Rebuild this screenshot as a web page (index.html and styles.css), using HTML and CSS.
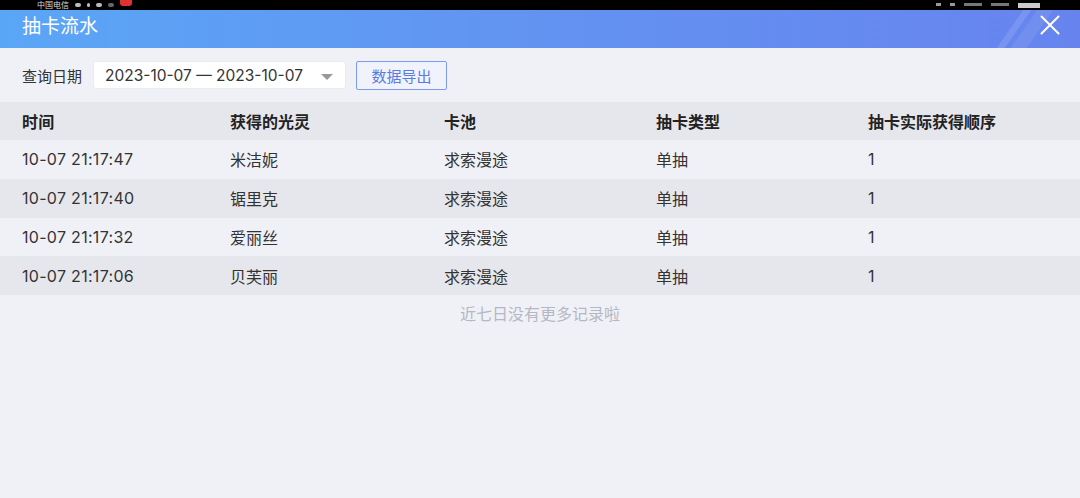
FILE: index.html
```html
<!DOCTYPE html>
<html lang="zh">
<head>
<meta charset="utf-8">
<link rel="stylesheet" href="styles.css">
</head>
<body>
<div class="statusbar">
  <div class="sb-left">
    <span class="carrier">中国电信</span>
    <span class="sb-dot"></span><span class="sb-dot small"></span><span class="sb-dot"></span>
    <span class="sb-dot gray"></span><span class="sb-badge"></span>
  </div>
  <div class="sb-right">
    <span class="sb-mark"></span><span class="sb-mark"></span><span class="sb-mark wide"></span><span class="sb-mark wide"></span><span class="sb-bat"></span>
  </div>
</div>
<header class="titlebar">
  <h1 class="title">抽卡流水</h1>
  <span class="stripe s1"></span><span class="stripe s2"></span>
  <svg class="close" viewBox="0 0 20 20" width="20" height="20"><path d="M1.5 1.5 L18.5 18.5 M18.5 1.5 L1.5 18.5" stroke="#fff" stroke-width="2" stroke-linecap="round" fill="none"/></svg>
</header>
<main class="content">
  <div class="filter">
    <span class="label">查询日期</span>
    <div class="datebox">
      <span class="dates">2023-10-07 — 2023-10-07</span>
      <svg class="caret" viewBox="0 0 12 6" width="12" height="6"><path d="M0 0 H12 L6 6 Z" fill="#999"/></svg>
    </div>
    <button class="export">数据导出</button>
  </div>
  <div class="table">
    <div class="row head"><span>时间</span><span>获得的光灵</span><span>卡池</span><span>抽卡类型</span><span>抽卡实际获得顺序</span></div>
    <div class="row"><span>10-07 21:17:47</span><span>米洁妮</span><span>求索漫途</span><span>单抽</span><span>1</span></div>
    <div class="row alt"><span>10-07 21:17:40</span><span>锯里克</span><span>求索漫途</span><span>单抽</span><span>1</span></div>
    <div class="row"><span>10-07 21:17:32</span><span>爱丽丝</span><span>求索漫途</span><span>单抽</span><span>1</span></div>
    <div class="row alt"><span>10-07 21:17:06</span><span>贝芙丽</span><span>求索漫途</span><span>单抽</span><span>1</span></div>
  </div>
  <p class="empty">近七日没有更多记录啦</p>
</main>
</body>
</html>
```

FILE: styles.css
```css
* { box-sizing: border-box; }
html, body { margin: 0; padding: 0; }
body {
  width: 1080px;
  height: 498px;
  overflow: hidden;
  background: #f0f1f7;
  font-family: Inter, "Noto Sans CJK SC", "Noto Sans", sans-serif;
  color: #333;
}
.statusbar {
  height: 10px;
  background: #000;
  display: flex;
  justify-content: space-between;
  overflow: hidden;
}
.sb-left { display: flex; align-items: center; gap: 6px; padding-left: 37px; }
.carrier {
  color: #ddd;
  font-size: 8px;
  line-height: 10px;
}
.sb-dot { width: 6px; height: 4px; background: #bbb; border-radius: 2px; }
.sb-dot.small { width: 3px; }
.sb-dot.gray { background: #666; }
.sb-badge { width: 12px; height: 6px; background: #d33; border-radius: 0 0 3px 3px; align-self: flex-start; }
.sb-right { display: flex; align-items: flex-end; gap: 9px; padding-right: 40px; }
.sb-mark { width: 5px; height: 3px; background: #999; margin-bottom: 4px; }
.sb-mark.wide { width: 18px; background: #777; }
.sb-bat { width: 22px; height: 5px; background: #ccc; margin-bottom: 2px; }

.titlebar {
  position: relative;
  height: 38px;
  background: linear-gradient(90deg, #5aa6f6 0%, #6391f1 55%, #6784ee 100%);
  display: flex;
  align-items: center;
  padding-left: 22px;
  overflow: hidden;
}
.title {
  margin: 0;
  font-size: 19px;
  font-weight: 400;
  color: #fff;
  line-height: 1;
  transform: translateY(-3px);
}
.stripe {
  position: absolute;
  top: 0;
  height: 38px;
  background: rgba(255, 255, 255, 0.12);
  transform: skewX(-35deg);
}
.stripe.s1 { left: 1010px; width: 8px; }
.stripe.s2 { left: 1024px; width: 16px; background: rgba(255,255,255,0.08); }
.close {
  position: absolute;
  right: 20px;
  top: 5px;
}

.content { padding-top: 13px; }
.filter {
  display: flex;
  align-items: center;
  height: 28px;
  padding-left: 22px;
}
.label { font-size: 15px; color: #333; width: 71px; }
.datebox {
  width: 253px;
  height: 28px;
  background: #fff;
  border-radius: 3px;
  display: flex;
  align-items: center;
  justify-content: space-between;
  padding: 0 12px 0 11px;
  border: 1px solid #ececf0;
}
.dates { font-size: 15.5px; color: #333; }
.caret { margin-top: 4px; }
.export {
  margin-left: 10px;
  width: 91px;
  height: 29px;
  border: 1.5px solid #7e9af0;
  border-radius: 2px;
  background: #f0f3fc;
  color: #5a7be2;
  font-family: inherit;
  font-size: 15px;
  padding: 0;
}

.table { margin-top: 13px; }
.row {
  display: grid;
  grid-template-columns: 208px 214px 212px 212px 1fr;
  padding-left: 22px;
  height: 38.75px;
  align-items: center;
  font-size: 16px;
  color: #333;
  background: #f0f1f7;
}
.row span:first-child { letter-spacing: 0.3px; }
.row.alt { background: #e6e7ed; }
.row.head {
  height: 38px;
  background: #e6e7ed;
  font-weight: 700;
  color: #222;
}
.empty {
  margin: 6px 0 0;
  text-align: center;
  font-size: 16px;
  color: #b4b7c4;
}
```
